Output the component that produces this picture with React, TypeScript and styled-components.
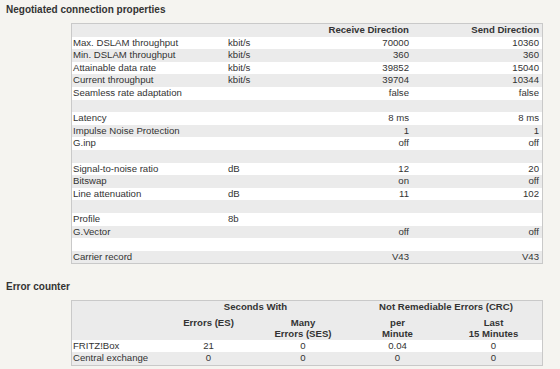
import React from "react";
import styled, { createGlobalStyle } from "styled-components";

const GlobalStyle = createGlobalStyle`
    html, body {
        margin: 0;
        padding: 0;
        background: #f5f4f0;
    }
    body {
        font-family: "Liberation Sans", Arial, sans-serif;
        color: #333;
    }
`;

const Page = styled.div`
    width: 560px;
    height: 369px;
    overflow: hidden;
    padding-top: 4px;
    box-sizing: border-box;
`;

const SectionTitle = styled.h2<{ $gap?: number }>`
    margin: ${({ $gap }) => $gap ?? 0}px 0 0 6px;
    font-size: 10px;
    line-height: 12px;
    font-weight: bold;
    color: #333;
`;

const Table = styled.table`
    margin: 7px 0 0 71px;
    width: 472px;
    table-layout: fixed;
    border-collapse: separate;
    border-spacing: 0;
    border: 1px solid #c9c9c9;
    background: #fff;
    font-size: 9.6px;
    color: #333;

    & td, & th {
        height: 12.6px;
        line-height: 12.6px;
        padding: 0 3px;
        white-space: nowrap;
        overflow: hidden;
    }

    & th {
        font-weight: bold;
    }

    & thead tr {
        background: #ebebeb;
    }

    & tbody tr:nth-child(even) {
        background: #ebebeb;
    }

    & td:first-child {
        padding-left: 1px;
    }
`;

const Num = styled.td<{ $align?: "right" | "center" }>`
    text-align: ${({ $align }) => $align ?? "right"};
`;

const Head = styled.th<{ $align?: "right" | "center" }>`
    text-align: ${({ $align }) => $align ?? "right"};
`;

const StackHead = styled.th`
    text-align: center;
    vertical-align: top;
    && {
        line-height: 11px;
        height: 22px;
        padding-top: 3.5px;
        padding-bottom: 0.5px;
    }
`;

type Row = [string, string, string, string];

const connection: Row[] = [
    ["Max. DSLAM throughput", "kbit/s", "70000", "10360"],
    ["Min. DSLAM throughput", "kbit/s", "360", "360"],
    ["Attainable data rate", "kbit/s", "39852", "15040"],
    ["Current throughput", "kbit/s", "39704", "10344"],
    ["Seamless rate adaptation", "", "false", "false"],
    ["", "", "", ""],
    ["Latency", "", "8 ms", "8 ms"],
    ["Impulse Noise Protection", "", "1", "1"],
    ["G.inp", "", "off", "off"],
    ["", "", "", ""],
    ["Signal-to-noise ratio", "dB", "12", "20"],
    ["Bitswap", "", "on", "off"],
    ["Line attenuation", "dB", "11", "102"],
    ["", "", "", ""],
    ["Profile", "8b", "", ""],
    ["G.Vector", "", "off", "off"],
    ["", "", "", ""],
    ["Carrier record", "", "V43", "V43"],
];

const errors: [string, string, string, string, string][] = [
    ["FRITZ!Box", "21", "0", "0.04", "0"],
    ["Central exchange", "0", "0", "0", "0"],
];

export default function App(): JSX.Element {
    return (
        <>
            <GlobalStyle />
            <Page>
                <SectionTitle>Negotiated connection properties</SectionTitle>
                <Table>
                    <colgroup>
                        <col style={{ width: 153 }} />
                        <col style={{ width: 75 }} />
                        <col style={{ width: 112 }} />
                        <col style={{ width: 130 }} />
                    </colgroup>
                    <thead>
                        <tr>
                            <th />
                            <th />
                            <Head>Receive Direction</Head>
                            <Head>Send Direction</Head>
                        </tr>
                    </thead>
                    <tbody>
                        {connection.map((r, i) => (
                            <tr key={i}>
                                <td>{r[0]}</td>
                                <td>{r[1]}</td>
                                <Num>{r[2]}</Num>
                                <Num>{r[3]}</Num>
                            </tr>
                        ))}
                    </tbody>
                </Table>

                <SectionTitle $gap={17}>Error counter</SectionTitle>
                <Table>
                    <colgroup>
                        <col style={{ width: 89 }} />
                        <col style={{ width: 95 }} />
                        <col style={{ width: 94 }} />
                        <col style={{ width: 95 }} />
                        <col style={{ width: 97 }} />
                    </colgroup>
                    <thead>
                        <tr>
                            <th />
                            <Head $align="center" colSpan={2}>Seconds With</Head>
                            <Head $align="center" colSpan={2}>Not Remediable Errors (CRC)</Head>
                        </tr>
                        <tr>
                            <StackHead />
                            <StackHead>Errors (ES)</StackHead>
                            <StackHead>Many<br />Errors (SES)</StackHead>
                            <StackHead>per<br />Minute</StackHead>
                            <StackHead>Last<br />15 Minutes</StackHead>
                        </tr>
                    </thead>
                    <tbody>
                        {errors.map((r, i) => (
                            <tr key={i}>
                                <td>{r[0]}</td>
                                <Num $align="center">{r[1]}</Num>
                                <Num $align="center">{r[2]}</Num>
                                <Num $align="center">{r[3]}</Num>
                                <Num $align="center">{r[4]}</Num>
                            </tr>
                        ))}
                    </tbody>
                </Table>
            </Page>
        </>
    );
}
